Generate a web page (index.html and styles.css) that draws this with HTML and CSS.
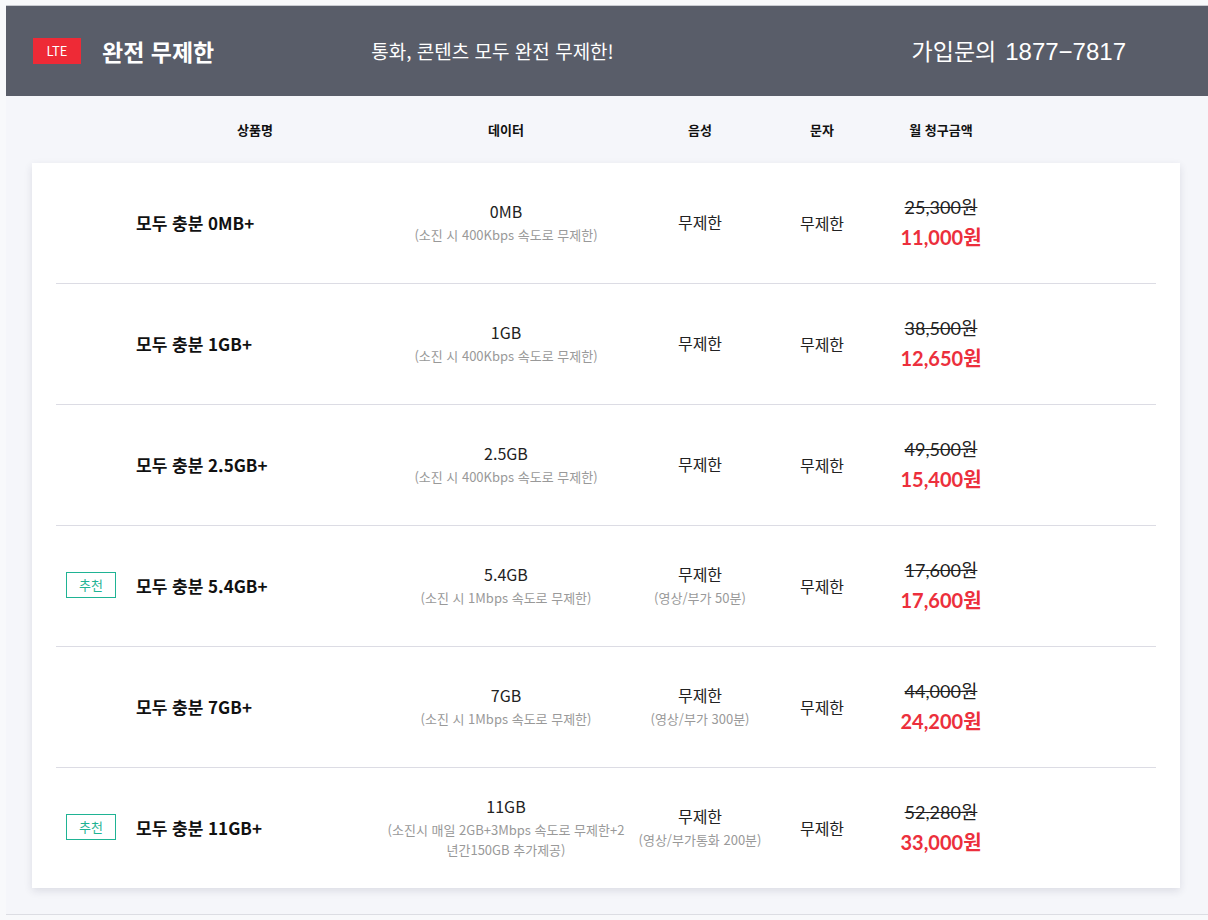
FILE: index.html
```html
<!DOCTYPE html>
<html lang="ko">
<head>
<meta charset="utf-8">
<title>LTE 완전 무제한</title>
<link rel="stylesheet" href="styles.css">
</head>
<body>
<div class="wrap">
  <header class="top">
    <span class="lte">LTE</span>
    <h1 class="title">완전 무제한</h1>
    <p class="subtitle">통화, 콘텐츠 모두 완전 무제한!</p>
    <p class="phone"><span class="phone-label">가입문의</span><span class="phone-num">1877−7817</span></p>
  </header>

  <div class="thead">
    <div class="th th-name">상품명</div>
    <div class="th">데이터</div>
    <div class="th">음성</div>
    <div class="th">문자</div>
    <div class="th">월 청구금액</div>
    <div class="th"></div>
  </div>

  <div class="card">
    <div class="row">
      <div class="c-name"><span class="slot"></span><span class="pname">모두 충분 0MB+</span></div>
      <div class="c-data"><span class="main">0MB</span><span class="sub">(소진 시 400Kbps 속도로 무제한)</span></div>
      <div class="c-voice"><span class="main">무제한</span></div>
      <div class="c-sms"><span class="main">무제한</span></div>
      <div class="c-price"><span class="old">25,300원</span><span class="new">11,000원</span></div>
      <div class="c-end"></div>
    </div>
    <div class="row">
      <div class="c-name"><span class="slot"></span><span class="pname">모두 충분 1GB+</span></div>
      <div class="c-data"><span class="main">1GB</span><span class="sub">(소진 시 400Kbps 속도로 무제한)</span></div>
      <div class="c-voice"><span class="main">무제한</span></div>
      <div class="c-sms"><span class="main">무제한</span></div>
      <div class="c-price"><span class="old">38,500원</span><span class="new">12,650원</span></div>
      <div class="c-end"></div>
    </div>
    <div class="row">
      <div class="c-name"><span class="slot"></span><span class="pname">모두 충분 2.5GB+</span></div>
      <div class="c-data"><span class="main">2.5GB</span><span class="sub">(소진 시 400Kbps 속도로 무제한)</span></div>
      <div class="c-voice"><span class="main">무제한</span></div>
      <div class="c-sms"><span class="main">무제한</span></div>
      <div class="c-price"><span class="old">49,500원</span><span class="new">15,400원</span></div>
      <div class="c-end"></div>
    </div>
    <div class="row">
      <div class="c-name"><span class="slot"><span class="badge">추천</span></span><span class="pname">모두 충분 5.4GB+</span></div>
      <div class="c-data"><span class="main">5.4GB</span><span class="sub">(소진 시 1Mbps 속도로 무제한)</span></div>
      <div class="c-voice"><span class="main">무제한</span><span class="sub">(영상/부가 50분)</span></div>
      <div class="c-sms"><span class="main">무제한</span></div>
      <div class="c-price"><span class="old">17,600원</span><span class="new">17,600원</span></div>
      <div class="c-end"></div>
    </div>
    <div class="row">
      <div class="c-name"><span class="slot"></span><span class="pname">모두 충분 7GB+</span></div>
      <div class="c-data"><span class="main">7GB</span><span class="sub">(소진 시 1Mbps 속도로 무제한)</span></div>
      <div class="c-voice"><span class="main">무제한</span><span class="sub">(영상/부가 300분)</span></div>
      <div class="c-sms"><span class="main">무제한</span></div>
      <div class="c-price"><span class="old">44,000원</span><span class="new">24,200원</span></div>
      <div class="c-end"></div>
    </div>
    <div class="row">
      <div class="c-name"><span class="slot"><span class="badge">추천</span></span><span class="pname">모두 충분 11GB+</span></div>
      <div class="c-data"><span class="main">11GB</span><span class="sub">(소진시 매일 2GB+3Mbps 속도로 무제한+2<br>년간150GB 추가제공)</span></div>
      <div class="c-voice"><span class="main">무제한</span><span class="sub">(영상/부가통화 200분)</span></div>
      <div class="c-sms"><span class="main">무제한</span></div>
      <div class="c-price"><span class="old">52,280원</span><span class="new">33,000원</span></div>
      <div class="c-end"></div>
    </div>
  </div>
</div>
</body>
</html>
```

FILE: styles.css
```css
* { box-sizing: border-box; }
html, body { margin: 0; padding: 0; }
body {
  background: #f8f9fb;
  font-family: "Noto Sans CJK KR", "Noto Sans", sans-serif;
  color: #222;
  overflow: hidden;
}
.wrap {
  margin: 5px 0 0 6px;
  background: #f5f6fa;
  border-top: 1px solid #c9cbd1;
  border-bottom: 1px solid #dcdde3;
  padding-bottom: 26px;
}
.top {
  height: 90px;
  background: #595d69;
  display: flex;
  align-items: center;
  padding-left: 27px;
  color: #fff;
}
.lte {
  width: 48px;
  height: 26px;
  background: #ee2a36;
  color: #fff;
  font-size: 13px;
  line-height: 26px;
  text-align: center;
}
.title {
  margin: 0 0 0 21px;
  font-size: 23px;
  font-weight: 700;
  line-height: 30px;
}
.subtitle {
  margin: 0 0 0 157px;
  font-size: 19px;
  line-height: 26px;
}
.phone {
  margin: 0 82px 0 auto;
  line-height: 30px;
  white-space: nowrap;
  display: flex;
  align-items: baseline;
}
.phone-label {
  font-size: 23px;
  margin-right: 9px;
}
.phone-num {
  font-family: "Liberation Sans", Arial, sans-serif;
  font-size: 24px;
}
.thead {
  display: grid;
  grid-template-columns: 330px 240px 148px 96px 142px 1fr;
  height: 67px;
  align-items: center;
  margin: 0 26px 0 50px;
}
.th {
  text-align: center;
  font-size: 13px;
  font-weight: 700;
  color: #111;
}
.th-name { padding-left: 68px; }

.card {
  margin: 0 28px 0 26px;
  background: #fff;
  box-shadow: 0 3px 8px rgba(40, 45, 70, 0.12);
  padding: 0 24px;
}
.row {
  display: grid;
  grid-template-columns: 330px 240px 148px 96px 142px 1fr;
  height: 121px;
  align-items: center;
  border-bottom: 1px solid #dcdce4;
}
.row:last-child { border-bottom: 0; height: 120px; }

.c-name {
  display: flex;
  align-items: center;
  padding-left: 10px;
  padding-bottom: 2px;
}
.slot {
  width: 50px;
  flex: none;
  margin-right: 20px;
}
.badge {
  display: block;
  width: 50px;
  height: 26px;
  border: 1px solid #1fb394;
  color: #1fb394;
  font-size: 13px;
  line-height: 24px;
  text-align: center;
}
.pname {
  font-size: 17px;
  font-weight: 700;
  color: #111;
}
.c-data, .c-voice, .c-sms, .c-price {
  display: flex;
  flex-direction: column;
  align-items: center;
  text-align: center;
  white-space: nowrap;
}
.c-data, .c-voice { padding-bottom: 2px; }
.main {
  font-size: 16px;
  line-height: 24px;
  color: #222;
}
.sub {
  margin-top: 2px;
  font-size: 13px;
  line-height: 20px;
  color: #999;
}
.c-price { font-family: Lato, "Noto Sans CJK KR", sans-serif; }
.old {
  font-size: 18px;
  line-height: 28px;
  color: #222;
  text-decoration: line-through;
}
.new {
  font-size: 20px;
  line-height: 32px;
  font-weight: 700;
  color: #ec2f3c;
}
```
